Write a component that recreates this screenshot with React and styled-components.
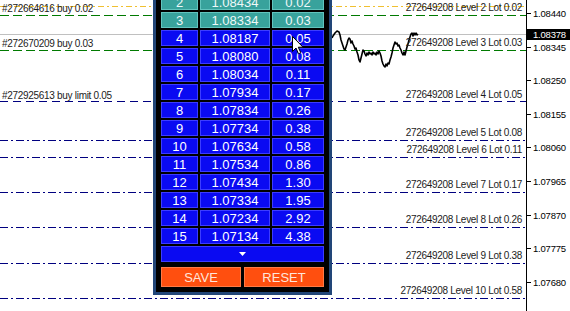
import React from 'react';
import styled, { createGlobalStyle } from 'styled-components';

const Global = createGlobalStyle`
  html, body { margin: 0; padding: 0; background: #fff; overflow: hidden; }
  #root { width: 570px; height: 311px; }
`;

const TOP_PRICE = 1.0844;
const STEP = 0.00095;
const STEP_PX = 33.6;
const TOP_Y = 13;
const yOf = (p) => TOP_Y + ((TOP_PRICE - p) / STEP) * STEP_PX;

const levels = [
  { n: 2, price: 1.08434, lot: '0.02', filled: true },
  { n: 3, price: 1.08334, lot: '0.03', filled: true },
  { n: 4, price: 1.08187, lot: '0.05' },
  { n: 5, price: 1.0808, lot: '0.08' },
  { n: 6, price: 1.08034, lot: '0.11' },
  { n: 7, price: 1.07934, lot: '0.17' },
  { n: 8, price: 1.07834, lot: '0.26' },
  { n: 9, price: 1.07734, lot: '0.38' },
  { n: 10, price: 1.07634, lot: '0.58' },
  { n: 11, price: 1.07534, lot: '0.86' },
  { n: 12, price: 1.07434, lot: '1.30' },
  { n: 13, price: 1.07334, lot: '1.95' },
  { n: 14, price: 1.07234, lot: '2.92' },
  { n: 15, price: 1.07134, lot: '4.38' },
];

const orders = [
  { level: 2, text: '#272664616 buy 0.02' },
  { level: 3, text: '#272670209 buy 0.03' },
  { level: 4, text: '#272925613 buy limit 0.05' },
];

const axisPrices = ['1.08440', '1.08345', '1.08250', '1.08155', '1.08060', '1.07965', '1.07870', '1.07775', '1.07680'];

const BID = 1.08378;

const pricePath = [
  [332, 38], [333, 36], [335, 33], [337, 31], [339, 32], [340, 35], [341, 40], [343, 46], [344, 49], [345, 50],
  [346, 47], [347, 44], [348, 40], [349, 38], [350, 39], [351, 43], [352, 41], [353, 44], [354, 46], [355, 49],
  [356, 48], [357, 52], [358, 55], [359, 60], [360, 62], [361, 58], [362, 54], [363, 50], [364, 51], [365, 54],
  [366, 56], [367, 53], [368, 55], [369, 52], [370, 54], [371, 53], [372, 55], [373, 52], [374, 54], [375, 53],
  [376, 55], [377, 52], [378, 54], [379, 51], [380, 53], [381, 56], [382, 61], [383, 64], [384, 66], [385, 67],
  [386, 64], [387, 66], [388, 63], [389, 64], [390, 60], [391, 57], [392, 53], [393, 48], [394, 45], [395, 42],
  [396, 44], [397, 43], [398, 46], [399, 45], [400, 48], [401, 50], [402, 53], [403, 55], [404, 52], [405, 55],
  [406, 51], [407, 47], [408, 44], [409, 40], [410, 37], [411, 34], [412, 33], [413, 36], [414, 33], [415, 35],
  [416, 33], [417, 35], [418, 34],
];

const Page = styled.div`
  display: flex;
  width: 570px;
  height: 311px;
  overflow: hidden;
  background: #fff;
  font-family: "Liberation Sans", Arial, sans-serif;
`;

const ChartArea = styled.div`
  position: relative;
  width: 526px;
  height: 311px;
  flex: none;
  overflow: hidden;
`;

const ChartSvg = styled.svg`
  position: absolute;
  left: 0;
  top: 0;
`;

const Axis = styled.div`
  position: relative;
  flex: 1;
  border-left: 1px solid #000;
`;

const Tick = styled.div`
  position: absolute;
  left: 0;
  width: 4px;
  height: 1px;
  background: #000;
`;

const AxisLabel = styled.div`
  position: absolute;
  left: 6px;
  font-size: 9.5px;
  line-height: 11px;
  letter-spacing: -0.2px;
  color: #000;
  white-space: nowrap;
`;

const BidBox = styled.div`
  position: absolute;
  left: 0;
  right: 0;
  height: 11px;
  background: #000;
  color: #fff;
  font-size: 9.5px;
  line-height: 11px;
  letter-spacing: -0.2px;
  padding-left: 6px;
  box-sizing: border-box;
  white-space: nowrap;
`;

const LineLabel = styled.div`
  position: absolute;
  ${(p) => (p.$side === 'left' ? 'left: 2px;' : 'right: 4px;')}
  font-size: 10px;
  line-height: 11px;
  letter-spacing: -0.3px;
  color: #1c1c1c;
  white-space: nowrap;
`;

const Panel = styled.div`
  position: absolute;
  left: 153px;
  top: -14px;
  border: 3px solid #224678;
  background: #000;
  padding: 5px;
  display: flex;
  flex-direction: column;
  gap: 2px;
`;

const Row = styled.div`
  display: grid;
  grid-template-columns: 37px 70px 52px;
  gap: 2px;
`;

const Cell = styled.div`
  height: 16px;
  box-sizing: border-box;
  display: flex;
  align-items: center;
  justify-content: center;
  font-size: 13px;
  color: ${(p) => (p.$filled ? '#eef8f8' : '#ffffff')};
  background: ${(p) => (p.$filled ? '#38a29c' : '#0a0af2')};
  border: 1px solid ${(p) => (p.$filled ? '#62c4be' : '#3c3cff')};
`;

const MoreRow = styled.div`
  height: 16px;
  box-sizing: border-box;
  background: #0a0af2;
  border: 1px solid #3c3cff;
  display: flex;
  align-items: center;
  justify-content: center;
`;

const Buttons = styled.div`
  display: grid;
  grid-template-columns: 80px 80px;
  gap: 3px;
  margin-top: 3px;
`;

const Button = styled.div`
  height: 20px;
  box-sizing: border-box;
  background: #ff4f0f;
  border: 1px solid #ff7a45;
  color: #ffe6da;
  font-size: 13px;
  display: flex;
  align-items: center;
  justify-content: center;
`;

const Cursor = styled.svg`
  position: absolute;
  left: 292px;
  top: 36px;
`;

function LevelLine({ lv }) {
  const y = Math.round(yOf(lv.price)) + 0.5;
  if (lv.n <= 3) {
    return <line x1="0" x2="526" y1={y} y2={y} stroke="#007a00" strokeDasharray="9 4" />;
  }
  if (lv.n === 4) {
    return <line x1="0" x2="526" y1={y - 1} y2={y - 1} stroke="#000080" strokeDasharray="8 5" />;
  }
  return <line x1="0" x2="526" y1={y} y2={y} stroke="#000080" strokeDasharray="8 3 2 3" />;
}

export default function App() {
  const bidY = Math.round(yOf(BID)) - 0.5;
  const topY = Math.round(yOf(1.0846)) + 0.5;
  return (
    <>
      <Global />
      <Page>
        <ChartArea>
          <ChartSvg width="526" height="311" shapeRendering="crispEdges">
            <line x1="0" x2="526" y1={topY} y2={topY} stroke="#f0c030" strokeDasharray="6 3 2 3" />
            <line x1="0" x2="526" y1={bidY} y2={bidY} stroke="#c0c0c0" />
            {levels
              .filter((lv) => lv.n <= 10)
              .map((lv) => (
                <LevelLine key={lv.n} lv={lv} />
              ))}
            <polyline
              points={pricePath.map((p) => p.join(',')).join(' ')}
              fill="none"
              stroke="#000"
              strokeWidth="1.6"
              strokeLinejoin="round"
              shapeRendering="auto"
            />
          </ChartSvg>

          {levels
            .filter((lv) => lv.n <= 10)
            .map((lv) => (
              <LineLabel key={lv.n} $side="right" style={{ top: Math.round(yOf(lv.price)) - 13 }}>
                272649208 Level {lv.n} Lot {lv.lot}
              </LineLabel>
            ))}
          {orders.map((o) => {
            const lv = levels.find((l) => l.n === o.level);
            return (
              <LineLabel key={o.text} $side="left" style={{ top: Math.round(yOf(lv.price)) - 12 }}>
                {o.text}
              </LineLabel>
            );
          })}

          <Panel>
            {levels.map((lv) => (
              <Row key={lv.n}>
                <Cell $filled={lv.filled}>{lv.n}</Cell>
                <Cell $filled={lv.filled}>{lv.price.toFixed(5)}</Cell>
                <Cell $filled={lv.filled}>{lv.lot}</Cell>
              </Row>
            ))}
            <MoreRow>
              <svg width="7" height="4" viewBox="0 0 7 4">
                <polygon points="0,0 7,0 3.5,4" fill="#fff" />
              </svg>
            </MoreRow>
            <Buttons>
              <Button>SAVE</Button>
              <Button>RESET</Button>
            </Buttons>
          </Panel>

          <Cursor width="12" height="19" viewBox="0 0 12 19">
            <path d="M0.5 0.5 L0.5 15.5 L4 12 L6.5 17.8 L8.8 16.8 L6.3 11.2 L11 11.2 Z" fill="#fff" stroke="#000" strokeWidth="1" />
          </Cursor>
        </ChartArea>

        <Axis>
          {axisPrices.map((p) => {
            const y = Math.round(yOf(parseFloat(p)));
            return (
              <React.Fragment key={p}>
                <Tick style={{ top: y }} />
                <AxisLabel style={{ top: y - 5 }}>{p}</AxisLabel>
              </React.Fragment>
            );
          })}
          <BidBox style={{ top: Math.round(yOf(BID)) - 6 }}>{BID.toFixed(5)}</BidBox>
        </Axis>
      </Page>
    </>
  );
}
